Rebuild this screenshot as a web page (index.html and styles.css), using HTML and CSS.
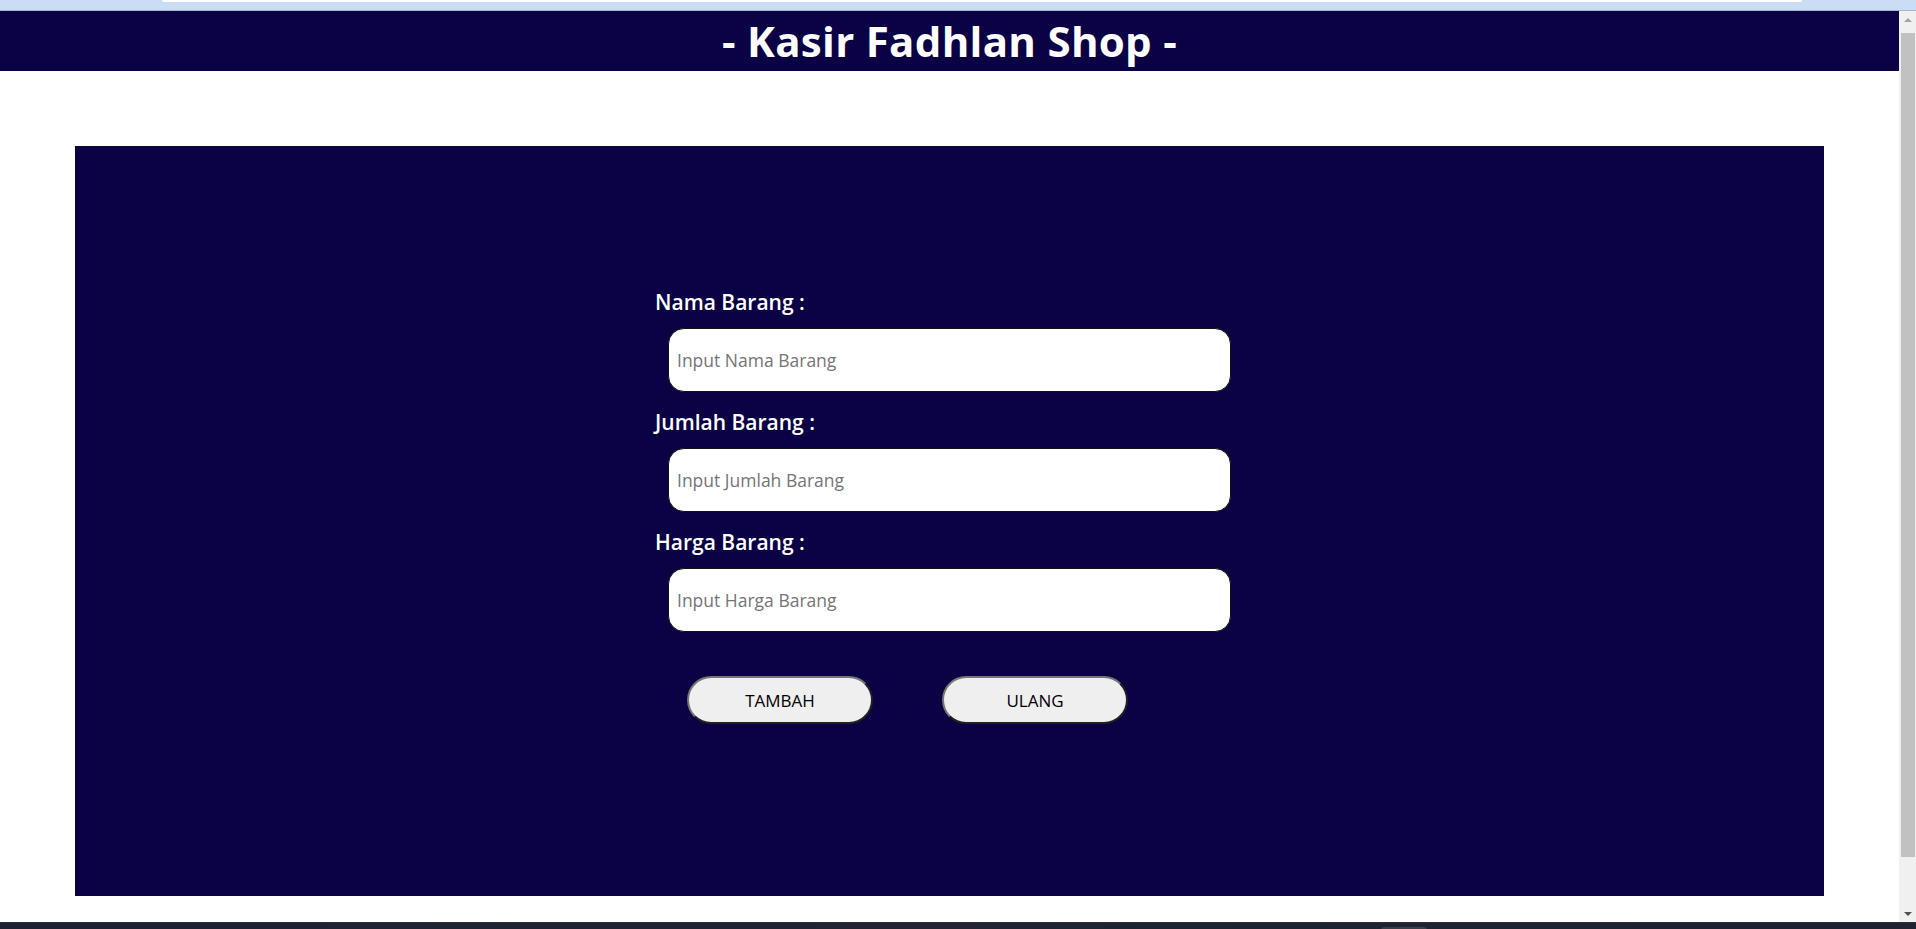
FILE: index.html
```html
<!DOCTYPE html>
<html lang="id">
<head>
<meta charset="utf-8">
<title>Kasir Fadhlan Shop</title>
<link rel="stylesheet" href="styles.css">
</head>
<body>
<div class="window">
  <div class="chrome-top"><div class="address"></div></div>
  <div class="viewport">
    <div class="page">
      <header class="topbar"><h1 class="title">- Kasir Fadhlan Shop -</h1></header>
      <main class="card">
        <form class="form">
          <div class="group">
            <label class="label" for="nama">Nama Barang :</label>
            <input class="field" id="nama" type="text" placeholder="Input Nama Barang">
          </div>
          <div class="group">
            <label class="label" for="jumlah">Jumlah Barang :</label>
            <input class="field" id="jumlah" type="text" placeholder="Input Jumlah Barang">
          </div>
          <div class="group">
            <label class="label" for="harga">Harga Barang :</label>
            <input class="field" id="harga" type="text" placeholder="Input Harga Barang">
          </div>
          <div class="actions">
            <button class="btn" type="button">TAMBAH</button>
            <button class="btn" type="reset">ULANG</button>
          </div>
        </form>
      </main>
    </div>
    <div class="scrollbar">
      <div class="sb-btn"><span class="tri-up"></span></div>
      <div class="sb-track"><div class="sb-thumb"></div></div>
      <div class="sb-btn"><span class="tri-down"></span></div>
    </div>
  </div>
  <div class="taskbar"><div class="task-item"></div></div>
</div>
</body>
</html>
```

FILE: styles.css
```css
* { box-sizing: border-box; }
html, body { margin: 0; padding: 0; }
body {
  font-family: "Open Sans", "Noto Sans", sans-serif;
  background: #ffffff;
  overflow: hidden;
}
.window {
  display: flex;
  flex-direction: column;
  width: 1916px;
  height: 929px;
}
.chrome-top {
  height: 11px;
  background: #cbdcf5;
  border-bottom: 1px solid #a6b5cc;
  flex: none;
}
.address {
  margin-left: 162px;
  width: 1640px;
  height: 2px;
  background: #ffffff;
  border-radius: 0 0 6px 6px;
}
.viewport {
  flex: 1;
  display: flex;
  min-height: 0;
}
.page {
  flex: 1;
  background: #ffffff;
  overflow: hidden;
}
.topbar {
  height: 60px;
  background: #0b0245;
  display: flex;
  justify-content: center;
  align-items: center;
}
.title {
  margin: 0;
  color: #ffffff;
  font-size: 42px;
  font-weight: 700;
  line-height: 60px;
  letter-spacing: 0.3px;
}
.card {
  display: block;
  margin: 75px 75px 0;
  height: 750px;
  background: #0b0245;
  padding-top: 141px;
}
.form {
  width: 589px;
  margin: 0 auto;
}
.group {
  margin-bottom: 15px;
}
.label {
  display: block;
  color: #ffffff;
  font-size: 21px;
  font-weight: 600;
  line-height: 30px;
  margin-bottom: 11px;
}
.field {
  display: block;
  margin: 0 13px;
  width: 563px;
  height: 64px;
  border: 1px solid #111111;
  border-radius: 16px;
  background: #ffffff;
  padding: 0 8px;
  font-family: inherit;
  font-size: 17.5px;
  color: #000;
}
.field::placeholder { color: #757575; }
.actions {
  display: flex;
  gap: 69px;
  padding-left: 32px;
  margin-top: 44px;
}
.btn {
  width: 186px;
  height: 48px;
  border: 2px outset #767676;
  border-radius: 24px;
  background: #efefef;
  font-family: inherit;
  font-size: 17px;
  font-weight: 500;
  color: #000;
}
.scrollbar {
  width: 17px;
  flex: none;
  background: #f0f0f0;
  display: flex;
  flex-direction: column;
}
.sb-btn {
  height: 17px;
  display: flex;
  align-items: center;
  justify-content: center;
  flex: none;
}
.tri-up, .tri-down {
  width: 0; height: 0;
  border-left: 4px solid transparent;
  border-right: 4px solid transparent;
}
.tri-up { border-bottom: 4px solid #a3a3a3; }
.tri-down { border-top: 4px solid #505050; }
.sb-track {
  flex: 1;
  padding: 5px 1px 0 2px;
}
.sb-thumb {
  height: 824px;
  background: #c1c1c1;
}
.taskbar {
  height: 7px;
  flex: none;
  background: linear-gradient(90deg, #1d2131, #222433 50%, #1c2330 60%, #1f2230);
  border-top: 1px solid #2c2f3b;
}
.task-item {
  margin-left: 1381px;
  width: 46px;
  height: 6px;
  margin-top: 4px;
  background: #3a3d48;
  border-radius: 3px 3px 0 0;
}
```
